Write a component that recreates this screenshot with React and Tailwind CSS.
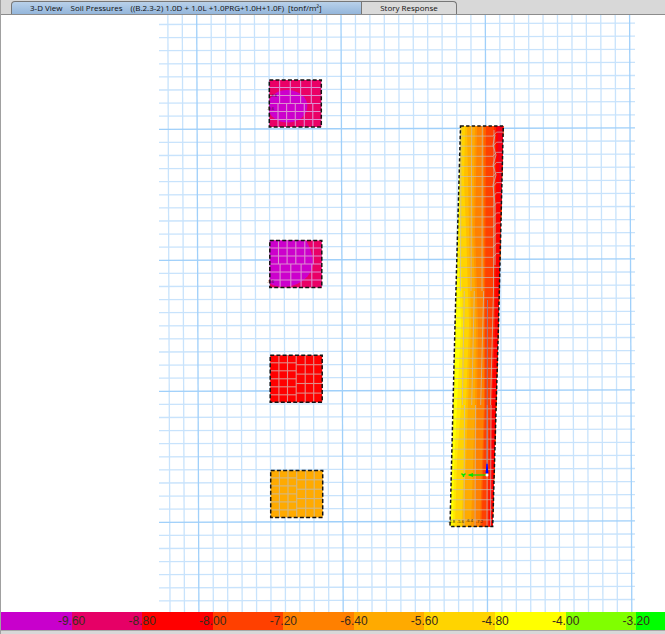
const legend = [
  { color: 'bg-[#c800cc]', grow: 'grow-71', label: '-9.60' },
  { color: 'bg-[#e60066]', grow: 'grow-71', label: '-8.80' },
  { color: 'bg-[#ff0000]', grow: 'grow-71', label: '-8.00' },
  { color: 'bg-[#ff4000]', grow: 'grow-71', label: '-7.20' },
  { color: 'bg-[#ff8000]', grow: 'grow-71', label: '-6.40' },
  { color: 'bg-[#ffaa00]', grow: 'grow-71', label: '-5.60' },
  { color: 'bg-[#ffd400]', grow: 'grow-71', label: '-4.80' },
  { color: 'bg-[#ffff00]', grow: 'grow-71', label: '-4.00' },
  { color: 'bg-[#80ff00]', grow: 'grow-71', label: '-3.20' },
  { color: 'bg-[#00ff00]', grow: 'grow-29' },
];

const MESH = '#c4bcb4';

function Grid() {
  const minor = [];
  const major = [];
  // the plan is seen very slightly rotated, so both line sets lean
  for (let i = -2; i <= 30; i++) {
    const x = 196.7 + i * 14.43;
    (i % 10 === 0 ? major : minor).push(<line key={`v${i}`} x1={x} y1="14" x2={x + 2.2} y2="612" />);
  }
  for (let i = -8; i <= 36; i++) {
    const y = 129.3 + i * 13.1;
    (i % 10 === 0 ? major : minor).push(<line key={`h${i}`} x1="159" y1={y} x2="635" y2={y - 1.4} />);
  }
  return (
    <g strokeWidth="1.3">
      <g stroke="#c8e3fc">{minor}</g>
      <g stroke="#a0d0fa">{major}</g>
    </g>
  );
}

function Outline({ x, y, w = 52, h = 47 }) {
  return <rect x={x} y={y} width={w} height={h} fill="none" stroke="#141414" strokeWidth="1.5" strokeDasharray="4 2.2" />;
}

// footing with a row of columns above and another below its middle line
function RowFooting({ x, y, fill, top, bottom, children }) {
  return (
    <g>
      <rect x={x} y={y} width="52" height="47" fill={fill} />
      {children}
      <g stroke="#dc8cd0" strokeWidth="1.1">
        {[7.5, 15.5, 23.5, 31.5, 39.5].map((d) => (
          <line key={d} x1={x} y1={y + d} x2={x + 52} y2={y + d} />
        ))}
        {top.map((d) => (
          <line key={d} x1={x + d} y1={y} x2={x + d} y2={y + 23.5} />
        ))}
        {bottom.map((d) => (
          <line key={d} x1={x + d} y1={y + 23.5} x2={x + d} y2={y + 47} />
        ))}
      </g>
      <Outline x={x} y={y} />
    </g>
  );
}

function SplitFooting({ x, y, fill, mesh }) {
  return (
    <g>
      <rect x={x} y={y} width="52" height="47" fill={fill} />
      <g stroke={mesh} strokeWidth="1.1">
        {[8.7, 17.3, 26, 35, 43.5].map((d) => (
          <line key={d} x1={x + d} y1={y} x2={x + d} y2={y + 47} />
        ))}
        {[7.5, 15.5, 23.5, 31.5, 39.5].map((d) => (
          <line key={d} x1={x} y1={y + d} x2={x + 26} y2={y + d} />
        ))}
        {[9.4, 18.8, 28.2, 37.8].map((d) => (
          <line key={d} x1={x + 26} y1={y + d} x2={x + 52} y2={y + d} />
        ))}
      </g>
      <Outline x={x} y={y} />
    </g>
  );
}

function Strip() {
  const edge = '460.5,126 503.3,126 498.5,325 492.7,526.5 450,526.5 455,325';
  const rows = [];
  for (let i = 1; i < 40; i++) rows.push(126 + i * 10.1);
  return (
    <g>
      <defs>
        <clipPath id="strip">
          <polygon points={edge} />
        </clipPath>
      </defs>
      <g clipPath="url(#strip)">
        <polygon points={edge} fill="#ffff00" />
        <polygon points="460,126 510,126 510,527 453,527 454,470 457,405 461,325 458,250 460,180" fill="#ffe800" />
        <polygon points="460,126 510,126 510,527 455,527 457,460 461,405 463,325 461,250 460,180" fill="#ffd400" />
        <polygon points="465,126 510,126 510,527 461.5,527 464,460 466,405 469,325 466,230 464,180" fill="#ffbf00" />
        <polygon points="467,126 510,126 510,527 463,527 466,460 468,405 471,325 469,230" fill="#ffaa00" />
        <polygon points="475,126 510,126 510,527 471,527 475,405 476,325 473,230" fill="#ff9500" />
        <polygon points="477,126 510,126 510,527 474,527 477,405 478,325 475,230" fill="#ff8000" />
        <polygon points="484,126 510,126 510,527 480,527 484,405 484,325" fill="#ff6000" />
        <polygon points="486,126 510,126 510,527 481.5,527 485,405 485,325" fill="#ff4000" />
        <polygon points="494,126 510,126 510,527 487,527 490,405 493.5,325 494.5,230" fill="#ff2000" />
        <polygon points="496,126 510,126 510,527 489,527 492,405 495,325 496,230" fill="#ff0000" />
        <polygon points="497.5,126 510,126 510,220 500,205" fill="#ee001c" />
        <g stroke={MESH} strokeWidth="0.9" strokeOpacity="0.8" fill="none">
          {rows.map((y) => (
            <line key={y} x1="448" y1={y} x2={y < 260 ? 493 : 505} y2={y} />
          ))}
          {rows.filter((y) => y < 260).map((y) => (
            <path key={y} d={`M493 ${y}l3.5 -4h8`} />
          ))}
          <path d="M461 126L460.5 291M471.7 126L471 291M482.3 126L482 291M494 130L493.5 291" />
          <path d="M495 135l-2 10l3 10l-3 10l3 10l-3 10l2 20v60" />
          <path d="M464.3 291L462.3 405M474.3 291L471.7 405M483.7 291L480.7 405M493.5 291L490.5 405" />
          <path d="M464.5 405L464 527M475.5 405L475 527M487.3 405L487 527M491 405L490.5 527" />
        </g>
        <path d="M487.5 300L487 474" stroke="#8f8396" strokeWidth="0.9" />
      </g>
      <polygon points={edge} fill="none" stroke="#141414" strokeWidth="1.5" strokeDasharray="3.4 2.2" />
    </g>
  );
}

function Axes() {
  return (
    <g>
      <path d="M487 475H469" stroke="#00e600" strokeWidth="1.2" />
      <path d="M467.5 475l5.5 -2v4z" fill="#00e600" />
      <path d="M461.5 473.5l2 2l2 -2M463.5 475v2" fill="none" stroke="#00e600" strokeWidth="1.4" />
      <path d="M487 475V464" stroke="#0000ff" strokeWidth="1" />
      <path d="M485.500 473l1.500 -11l1.500 11z" fill="#0000ff" />
      <circle cx="487" cy="475" r="1.5" fill="#fff" />
    </g>
  );
}

function PressurePlan() {
  return (
    <svg viewBox="1 15 664 597" className="block w-full" role="img" aria-label="Soil pressures plan" fontFamily="Liberation Sans, sans-serif">
      <Grid />
      <RowFooting x={269.3} y={80} fill="#ea0066" top={[10.3, 21, 31.3, 42]} bottom={[8.7, 17.3, 26, 35, 43.5]}>
        <path d="M269.3 100c3-6 10-10 17-10c11 0 21 6 21 16s-9 16.500-20 16.500c-8 0-15-4-18-10z" fill="#cc00cc" />
      </RowFooting>
      <RowFooting x={269.8} y={240.5} fill="#ea0066" top={[8.7, 17.3, 26, 35, 43.5]} bottom={[10.3, 21, 31.3, 42]}>
        <path d="M269.8 240.500H306c5 8 7 17 7 24c-2 12-12 20-25 22c-7 .8-13 0-18.200-3z" fill="#cc00cc" />
      </RowFooting>
      <SplitFooting x={270.2} y={355.3} fill="#ff0000" mesh="#e08c88" />
      <SplitFooting x={270.7} y={470.4} fill="#ffaa00" mesh="#d2b886" />
      <g fontSize="4" fill="#3c1430">
        <text x="270" y="97">-9.6</text>
        <text x="267" y="110">-9.6</text>
        <text x="267" y="283">-9.6</text>
      </g>
      <Strip />
      <g fontSize="4" fill="#332200">
        <text x="448" y="523">-4.8</text>
        <text x="457" y="523">-5.6</text>
        <text x="466" y="522">-6.4</text>
        <text x="476" y="523">-7.2</text>
      </g>
      <Axes />
    </svg>
  );
}

export default function App() {
  return (
    <div className="flex flex-col border-l border-[#a0a0a0] bg-white">
      <div role="tablist" className="flex h-[15px] items-end border-b border-[#8c8c8c] bg-[#d8d8d8] pl-[10px] font-['Open_Sans',sans-serif] text-[8px] leading-[12px] text-[#101010]">
        <button role="tab" aria-selected="true" className="flex h-[13px] w-[351px] gap-2 rounded-tl-sm border border-b-0 border-[#777] bg-linear-to-b from-[#b9d1ea] to-[#94b6db] pl-[18px] whitespace-nowrap">
          <span>3-D View</span>
          <span>Soil Pressures</span>
          <span className="flex gap-1">
            <span>((B.2.3-2) 1.0D + 1.0L +1.0PRG+1.0H+1.0F)</span>
            <span>[tonf/m²]</span>
          </span>
        </button>
        <button role="tab" aria-selected="false" className="h-[13px] w-[95px] rounded-tr-sm border border-b-0 border-l-0 border-[#777] bg-[#dadada] text-center whitespace-nowrap">
          Story Response
        </button>
      </div>
      <PressurePlan />
      <div className="flex h-[18px] font-['Liberation_Sans',sans-serif] text-[12px] leading-[18px] text-[#3a2a1c]">
        {legend.map((step) => (
          <div key={step.color} className={`flex basis-0 justify-end ${step.color} ${step.grow}`}>
            {step.label && <span className="relative flex w-0 justify-center">{step.label}</span>}
          </div>
        ))}
      </div>
      <div className="h-1 border-t border-[#a8a8a8] bg-[#d8d8d8]" />
    </div>
  );
}
